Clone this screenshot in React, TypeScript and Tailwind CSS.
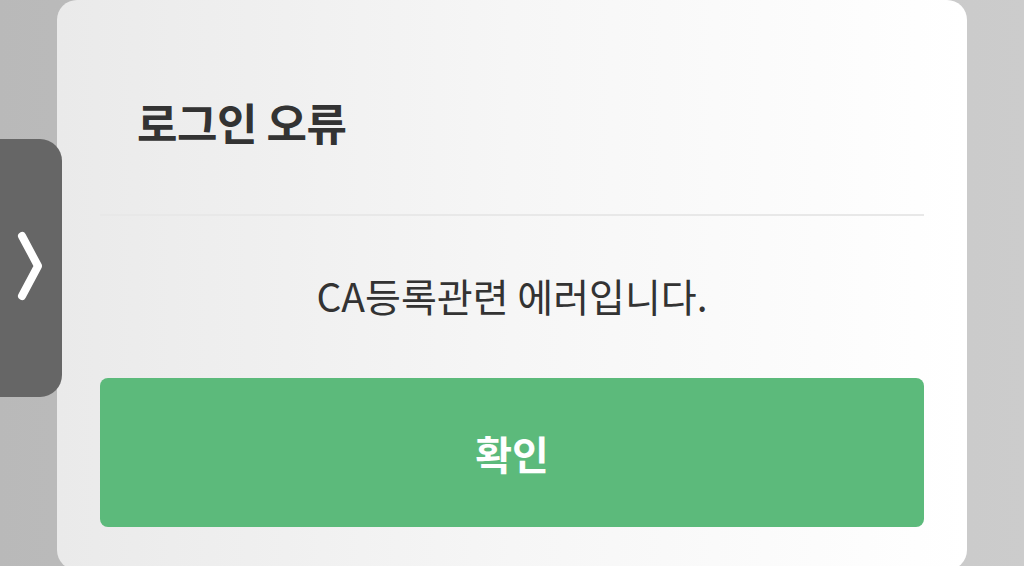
import React from "react";

export default function App() {
  return (
    <div className="relative w-[1024px] h-[566px] overflow-hidden bg-gradient-to-r from-[#b9b9b9] to-[#cccccc]" style={{ fontFamily: '"Noto Sans CJK KR", "Noto Sans", sans-serif' }}>
      <div className="absolute left-[57px] top-[0px] w-[910px] h-[570px] rounded-[20px] bg-gradient-to-r from-[#eaeaea] via-[#f6f6f6] to-white flex flex-col px-[43px]">
        <div className="h-[214px] flex items-center pl-[37px] pt-[30px]">
          <h1 className="text-[44px] font-bold text-[#333333] tracking-[-0.5px]">로그인 오류</h1>
        </div>
        <div className="h-[2px] bg-[#e8e8e8]" />
        <div className="h-[162px] flex items-center justify-center pb-[4px]">
          <p className="text-[39px] text-[#333333]">CA등록관련 에러입니다.</p>
        </div>
        <button className="h-[149px] w-full rounded-[8px] bg-[#5cba7b] flex items-center justify-center">
          <span className="text-[40px] font-bold text-white">확인</span>
        </button>
      </div>
      <div className="absolute left-[-20px] top-[139px] w-[82px] h-[258px] rounded-[22px] bg-[#666666] flex items-center justify-end pr-[18px]">
        <svg width="28" height="76" viewBox="0 0 28 76">
          <path d="M6 6 L22 36 L6 66" fill="none" stroke="white" strokeWidth="8" strokeLinecap="round" strokeLinejoin="round" />
        </svg>
      </div>
    </div>
  );
}
